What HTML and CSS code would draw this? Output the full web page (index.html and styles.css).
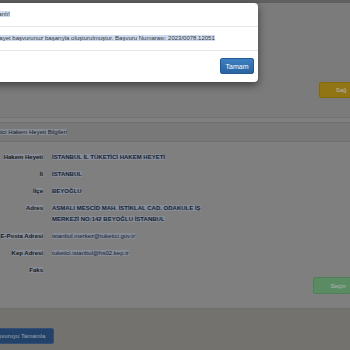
FILE: index.html
```html
<!DOCTYPE html>
<html lang="tr">
<head>
    <meta charset="UTF-8">
    <meta name="viewport" content="width=device-width, initial-scale=1.0">
    <title>Başvuru</title>
    <link rel="stylesheet" href="styles.css">
</head>
<body>
    <div class="page">
        <div class="topbar"></div>
        <div class="ust-alan">
            <button class="btn btn-sag">Sağ</button>
        </div>

        <div class="panel">
            <div class="panel-baslik"><span class="sel">Tüketici Hakem Heyeti Bilgileri</span></div>
            <div class="panel-govde">
                <div class="bilgiler">
                    <div class="etiket"><span class="sel">Hakem Heyeti</span></div>
                    <div class="deger"><span class="sel">İSTANBUL İL TÜKETİCİ HAKEM HEYETİ</span></div>

                    <div class="etiket"><span class="sel">İl</span></div>
                    <div class="deger"><span class="sel">İSTANBUL</span></div>

                    <div class="etiket"><span class="sel">İlçe</span></div>
                    <div class="deger"><span class="sel">BEYOĞLU</span></div>

                    <div class="etiket"><span class="sel">Adres</span></div>
                    <div class="deger"><span class="sel">ASMALI MESCİD MAH. İSTİKLAL CAD. ODAKULE İŞ</span><br><span class="sel">MERKEZİ NO:142 BEYOĞLU İSTANBUL</span></div>

                    <div class="etiket"><span class="sel">E-Posta Adresi</span></div>
                    <div class="deger normal"><span class="sel">istanbul.merkez@tuketici.gov.tr</span></div>

                    <div class="etiket"><span class="sel">Kep Adresi</span></div>
                    <div class="deger normal"><span class="sel">tuketici.istanbul@hs02.kep.tr</span></div>

                    <div class="etiket"><span class="sel">Faks</span></div>
                    <div class="deger"></div>
                </div>
                <div class="panel-alt">
                    <button class="btn btn-secin">Seçin</button>
                </div>
            </div>
        </div>

        <div class="alt-alan">
            <button class="btn btn-tamamla">Başvuruyu Tamamla</button>
        </div>
    </div>

    <div class="backdrop"></div>

    <div class="modal">
        <div class="modal-baslik"><span class="sel-acik">Başarılı!</span></div>
        <div class="modal-govde"><span class="sel-acik">Şikayet başvurunuz başarıyla oluşturulmuştur. Başvuru Numarası: 2023/0078.12051</span></div>
        <div class="modal-alt">
            <button class="btn btn-tamam">Tamam</button>
        </div>
    </div>
</body>
</html>
```

FILE: styles.css
```css
html, body {
    margin: 0;
    padding: 0;
}

body {
    font-family: 'Liberation Sans', Arial, sans-serif;
    font-size: 6px;
    background-color: #b6b6b6;
    width: 350px;
    height: 350px;
    overflow: hidden;
    position: relative;
}

.page {
    margin-left: -24px;
    width: 400px;
}

.topbar {
    height: 3px;
    background-color: #8a8a8a;
}

.ust-alan {
    height: 115px;
    background-color: #b0b0b0;
    border-bottom: 1px solid #a4a4a4;
    display: flex;
    justify-content: flex-end;
    align-items: flex-start;
    padding: 79px 13px 0 0;
    box-sizing: border-box;
}

.panel {
    margin-top: 4px;
    border-top: 1px solid #a0a0a0;
}

.panel-baslik {
    height: 18px;
    line-height: 18px;
    padding-left: 10px;
    color: #2c2c2c;
    background-color: #adadad;
    border-bottom: 1px solid #a0a0a0;
}

.panel-govde {
    padding: 10px 0 0 0;
    background-color: #b6b6b6;
    border-bottom: 1px solid #a0a0a0;
    height: 167px;
    box-sizing: border-box;
}

.bilgiler {
    display: grid;
    grid-template-columns: 67px 1fr;
    column-gap: 9px;
    row-gap: 6px;
    line-height: 11px;
}

.etiket {
    text-align: right;
    font-weight: bold;
    color: #2b2b2b;
}

.deger {
    font-weight: bold;
    color: #26324b;
}

.deger.normal {
    font-weight: normal;
}

.sel {
    background-color: #c0c9d8;
}

.panel-alt {
    display: flex;
    justify-content: flex-end;
    padding-right: 13px;
    margin-top: 1px;
}

.alt-alan {
    background-color: #a6a49f;
    height: 41px;
    padding: 19px 0 0 6px;
    box-sizing: border-box;
}

.btn {
    font-family: 'Liberation Sans', Arial, sans-serif;
    font-size: 6px;
    border: 1px solid transparent;
    border-radius: 2px;
    color: #fff;
    cursor: pointer;
    padding: 0;
}

.btn-sag {
    width: 44px;
    height: 16px;
    background-color: #d0a61e;
    border-color: #bf9716;
}

.btn-secin {
    width: 50px;
    height: 17px;
    background-color: #82c88d;
    border-color: #74b67e;
}

.btn-tamamla {
    height: 16px;
    padding: 0 8px;
    background-color: #325f97;
    border-color: #4a73a6;
    color: #dfe6ef;
}

.backdrop {
    position: absolute;
    inset: 0;
    background-color: rgba(0, 0, 0, 0.3);
}

.modal {
    position: absolute;
    top: 3px;
    left: -20px;
    width: 278px;
    background-color: #fff;
    border-radius: 4px;
    box-shadow: 0 3px 9px rgba(0, 0, 0, 0.5);
    color: #333;
}

.modal-baslik {
    height: 23px;
    line-height: 23px;
    padding-left: 8px;
    border-bottom: 1px solid #e5e5e5;
}

.modal-govde {
    height: 23px;
    line-height: 23px;
    padding-left: 11px;
    border-bottom: 1px solid #e5e5e5;
}

.sel-acik {
    background-color: #cfdcf0;
}

.modal-alt {
    display: flex;
    justify-content: flex-end;
    padding: 7px 4px 8px 0;
}

.btn-tamam {
    width: 34px;
    height: 16px;
    font-size: 7px;
    background: linear-gradient(#3d7fc2, #2a63a0);
    border-color: #245a92;
}
```
